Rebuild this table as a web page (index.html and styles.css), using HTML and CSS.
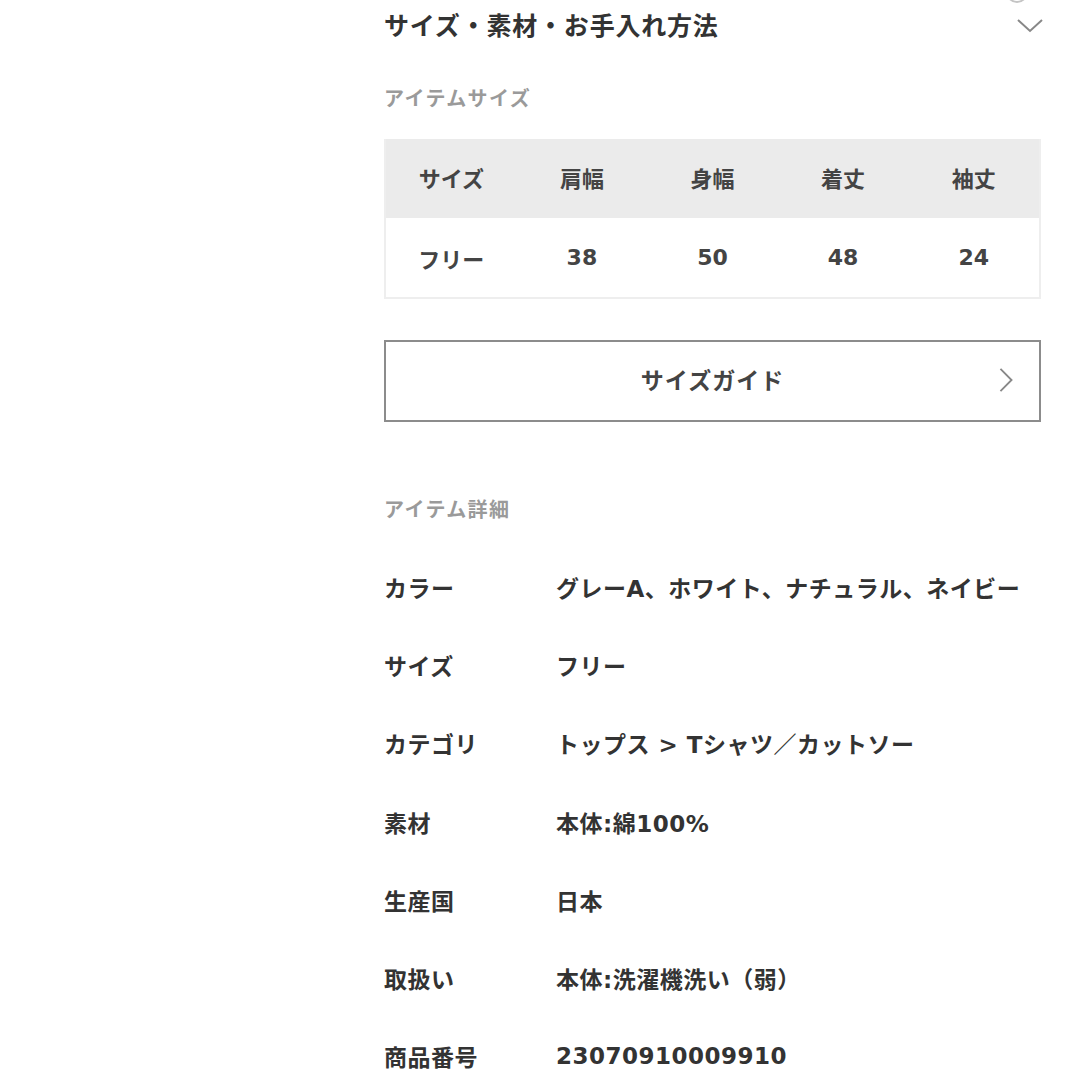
FILE: index.html
```html
<!DOCTYPE html>
<html lang="ja">
<head>
    <meta charset="UTF-8">
    <meta name="viewport" content="width=device-width, initial-scale=1.0">
    <title>サイズ・素材・お手入れ方法</title>
    <link rel="stylesheet" href="styles.css">
</head>
<body>
    <div class="container">
        <span class="top-dot"></span>

        <div class="section-head">
            <h2>サイズ・素材・お手入れ方法</h2>
            <svg class="chevron-down" viewBox="0 0 26 14">
                <polyline points="1,1 13,12 25,1" />
            </svg>
        </div>

        <div class="sub-label">アイテムサイズ</div>

        <div class="size-table">
            <div class="size-row head">
                <div>サイズ</div>
                <div>肩幅</div>
                <div>身幅</div>
                <div>着丈</div>
                <div>袖丈</div>
            </div>
            <div class="size-row">
                <div>フリー</div>
                <div>38</div>
                <div>50</div>
                <div>48</div>
                <div>24</div>
            </div>
        </div>

        <div class="guide-button">
            <span>サイズガイド</span>
            <svg class="chevron-right" viewBox="0 0 14 26">
                <polyline points="1,1 13,13 1,25" />
            </svg>
        </div>

        <div class="sub-label details-label">アイテム詳細</div>

        <div class="details">
            <div class="detail-row">
                <div class="detail-key">カラー</div>
                <div class="detail-value">グレーA、ホワイト、ナチュラル、ネイビー</div>
            </div>
            <div class="detail-row">
                <div class="detail-key">サイズ</div>
                <div class="detail-value">フリー</div>
            </div>
            <div class="detail-row">
                <div class="detail-key">カテゴリ</div>
                <div class="detail-value">トップス &gt; Tシャツ／カットソー</div>
            </div>
            <div class="detail-row">
                <div class="detail-key">素材</div>
                <div class="detail-value">本体:綿100%</div>
            </div>
            <div class="detail-row">
                <div class="detail-key">生産国</div>
                <div class="detail-value">日本</div>
            </div>
            <div class="detail-row">
                <div class="detail-key">取扱い</div>
                <div class="detail-value">本体:洗濯機洗い（弱）</div>
            </div>
            <div class="detail-row">
                <div class="detail-key">商品番号</div>
                <div class="detail-value">23070910009910</div>
            </div>
        </div>
    </div>
</body>
</html>
```

FILE: styles.css
```css
body {
    font-family: "DejaVu Sans", "Noto Sans CJK JP", sans-serif;
    background-color: #fff;
    color: #333;
    margin: 0;
    padding: 0;
}

.container {
    width: 657px;
    margin-left: 384px;
    position: relative;
}

.top-dot {
    position: absolute;
    top: -19px;
    left: 622px;
    width: 18px;
    height: 18px;
    border-radius: 50%;
    border: 2px solid #c4c4c4;
}

.section-head {
    display: flex;
    justify-content: space-between;
    align-items: center;
    height: 54px;
}

h2 {
    margin: 0;
    font-size: 25px;
    font-weight: 700;
    letter-spacing: 0.8px;
    color: #333;
    line-height: 30px;
}

.chevron-down {
    width: 26px;
    height: 14px;
    margin-right: -2px;
    margin-top: -2px;
}

.chevron-down polyline,
.chevron-right polyline {
    fill: none;
    stroke: #888;
    stroke-width: 2;
}

.sub-label {
    margin-top: 33px;
    font-size: 20px;
    line-height: 24px;
    font-weight: 700;
    letter-spacing: 1.4px;
    color: #9a9a9a;
}

.size-table {
    margin-top: 28px;
    border: 2px solid #eee;
    border-top: none;
}

.size-row {
    display: grid;
    grid-template-columns: repeat(5, 1fr);
    height: 79px;
    align-items: center;
    text-align: center;
    font-size: 22px;
    font-weight: 700;
    color: #444;
}

.size-row.head {
    background: #ebebeb;
    padding-bottom: 3px;
    box-sizing: border-box;
}

.guide-button {
    margin-top: 41px;
    height: 74px;
    border: 2px solid #8c8c8c;
    display: flex;
    align-items: center;
    justify-content: center;
    position: relative;
    font-size: 23px;
    font-weight: 700;
    letter-spacing: 1px;
    color: #444;
    padding-bottom: 4px;
}

.chevron-right {
    position: absolute;
    right: 26px;
    top: 26px;
    width: 14px;
    height: 24px;
}

.details-label {
    margin-top: 76px;
}

.details {
    margin-top: 26px;
}

.detail-row {
    display: flex;
    align-items: center;
    height: 78.2px;
    font-size: 23px;
    font-weight: 700;
    letter-spacing: 0.5px;
    color: #333;
}

.detail-key {
    width: 172px;
    flex-shrink: 0;
}
```
